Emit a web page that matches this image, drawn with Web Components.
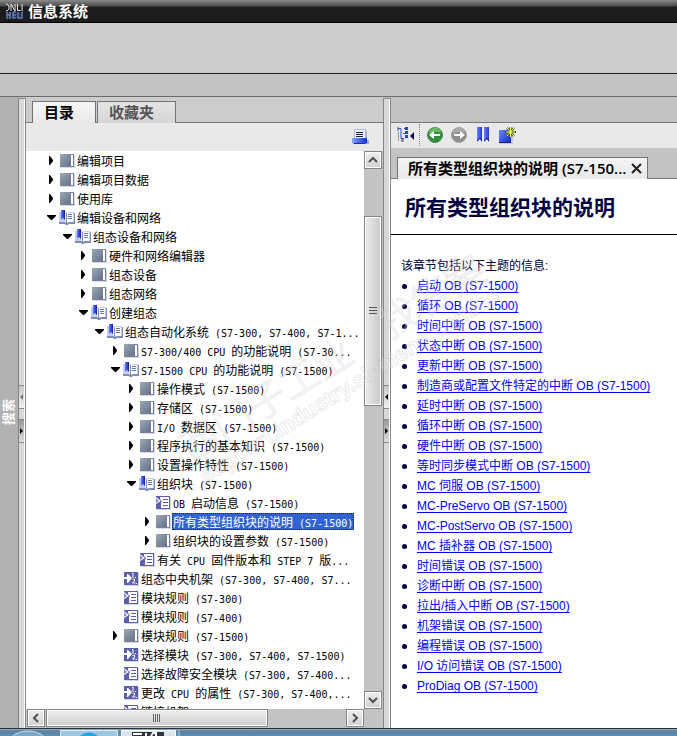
<!DOCTYPE html>
<html lang="zh-CN">
<head>
<meta charset="utf-8">
<title>信息系统</title>
<style>
html, body { margin: 0; height: 100%; }
body { overflow: hidden; font-family: "Liberation Sans", "Noto Sans CJK SC", sans-serif; font-size: 12px; }
</style>
</head>
<body>
<info-system></info-system>
<script>
const ICONS = {
  closed: `<svg width="16" height="16" viewBox="0 0 16 16"><defs><linearGradient id="g" x1="0" y1="0" x2="1" y2="1"><stop offset="0" stop-color="#9aa9b8"/><stop offset="1" stop-color="#667088"/></linearGradient></defs><path d="M2 2h14v13H2z" fill="#d3d9e6"/><path d="M1 1h14v13H1z" fill="#77819a"/><path d="M1 1h11v12H1z" fill="url(#g)"/><path d="M12 2h2v11h-2z" fill="#fff"/></svg>`,
  open: `<svg width="16" height="16" viewBox="0 0 16 16"><defs><linearGradient id="g" x1="0" y1="0" x2="1" y2="0"><stop offset="0" stop-color="#6b83ff"/><stop offset="1" stop-color="#0b13b4"/></linearGradient></defs><path d="M0 2h7l1 1 1-1h6v11H0z" fill="#c3cdec"/><path d="M0 12h6l1 1h2l1-1h5V3h1v11h-6l-1 1H7l-1-1H0z" fill="#7e8cb4"/><path d="M6 3h1v9H6z" fill="#eef2fc"/><path d="M7.500 3v10" stroke="#7f8cb8"/><path d="M8 3h6v9H8z" fill="#fbfcff"/><path d="M9 4.500h4M9 6.500h4M9 8.500h4" stroke="#6478b4"/><path d="M2 0h4v10L4 8l-2 2z" fill="url(#g)"/></svg>`,
  page: `<svg width="16" height="16" viewBox="0 0 16 16"><path d="M2 2h14v13H2z" fill="#d4d7e9"/><path d="M1 1h14v13H1z" fill="#5c60aa"/><path d="M5 2h9v11H6V8l1-2-2-2z" fill="#fff"/><path d="M1 2l5 4-5 3z" fill="#fff"/><path d="M1 3l3 3-3 2z" fill="#8589c4"/><path d="M8 4.500h5M8 7.500h5M8 10.500h5" stroke="#5c60aa"/></svg>`,
  link: `<svg width="16" height="16" viewBox="0 0 16 16"><path d="M2 2h14v13H2z" fill="#cfd2e8"/><path d="M1 1h14v13H1z" fill="#5b60a8"/><path d="M1 6h3V3h1l4 4-4 5H4V8H1z" fill="#fff"/><path d="M9 3l1-1v5M12 6.500h1M9.500 9l1-1h1v2l-2 2h3M13 12.500h1" fill="none" stroke="#fff"/></svg>`,
  print: `<svg width="17" height="17" viewBox="0 0 17 17"><defs><linearGradient id="g"><stop stop-color="#86a5ff"/><stop offset="1" stop-color="#1230d8"/></linearGradient></defs><path d="M4 2h11v9H4zM2 11h15v4H2z" fill="#a7abb8"/><path d="M2.500.5h11v11h-11z" fill="#edf3ff" stroke="#a9b8df"/><path d="M4 3.500h7M4 5.500h7M4 7.500h7" stroke="#101858"/><path d="M0 9h15v5l-2 1H2l-2-1z" fill="url(#g)"/><path d="M2 14.500h11" stroke="#1c2bb2"/></svg>`,
  tree: `<svg width="17" height="17" viewBox="0 0 17 17"><path d="M1 1v4M1 2.500h3v10h3M7 2.500h2M6 7.500h2" fill="none" stroke="#334dbc"/><path d="M1.500 6v9M4 14.500h3" fill="none" stroke="#9b9ba0"/><path d="M8 1h3v3H8zM8 5h3v3H8zM8 9h3v3H8z" fill="#2643c2"/><path d="M4 13h3v3H4z" fill="#909096"/><path d="M17 6v8l-4-4z" fill="#080b50"/></svg>`,
  back: `<svg width="16" height="16" viewBox="0 0 16 16"><circle cx="8" cy="8" r="7.500" fill="#2f9137" stroke="#557d5a"/><path d="M2 7a6 6 0 0 1 12-1q-6-3-12 1" fill="#67bb5e"/><path d="M2 8l5-4v3h6v2H7v3z" fill="#fff"/></svg>`,
  next: `<svg width="16" height="16" viewBox="0 0 16 16"><circle cx="8" cy="8" r="7.500" fill="#8c8c8c" stroke="#a1a1a1"/><path d="M2 7a6 6 0 0 1 12-1q-6-3-12 1" fill="#aaa"/><path d="M14 8L9 4v3H3v2h6v3z" fill="#fff"/></svg>`,
  marks: `<svg width="14" height="17" viewBox="0 0 14 17"><defs><linearGradient id="g" x2="1"><stop stop-color="#6c84ff"/><stop offset="1" stop-color="#2637cf"/></linearGradient></defs><path d="M1 1h5v15l-2-3-3 3z" fill="url(#g)"/><path d="M8 1h5v15l-2-3-3 3z" fill="url(#g)"/><path d="M1 15l3-3 2 3M8 15l3-3 2 3" fill="none" stroke="#1a1e81"/></svg>`,
  add: `<svg width="18" height="18" viewBox="0 0 18 18"><defs><linearGradient id="g" x2="1" y2="1"><stop stop-color="#6c88ff"/><stop offset="1" stop-color="#1327c9"/></linearGradient></defs><path d="M2 5h13v13H2z" fill="#c9c9d0"/><path d="M1 4h12v13H1z" fill="url(#g)"/><path d="M1 16.500h12" stroke="#171c77"/><path d="M12.500 1v10M7 6h11M9 2l7 8M16 2L9 10" stroke="#344b30" stroke-width="2"/><path d="M12.500 1v10M8 6h9M9 2l7 8M16 2L9 10" stroke="#ffff58"/></svg>`,
  help: `<svg width="17" height="17" viewBox="0 0 17 17"><path d="M0 1h1l2 2v3L1 8H0M5 8V1l4 7V1M11.500 1v6.500h3M16 1v7" fill="none" stroke="#e3e7ec"/><path d="M0 9h17v7H0z" fill="#263052"/><path d="M1 9v7M4 9v7M1 12h3M10 9H7v6h3M7 12h3M12 9v6h3M16 16V9h1" fill="none" stroke="#8497ce"/></svg>`
};

const define = (name, css, markup = '<slot></slot>', setup) => {
  const template = document.createElement('template');
  template.innerHTML = `<style>*{box-sizing:border-box}${css}</style>${typeof markup === 'string' ? markup : ''}`;
  customElements.define(name, class extends HTMLElement {
    connectedCallback() {
      if (this.shadowRoot) return;
      const root = this.attachShadow({ mode: 'open' });
      root.append(template.content.cloneNode(true));
      if (typeof markup === 'function') root.append(document.createRange().createContextualFragment(markup(this)));
      if (setup) setup(this, root);
    }
  });
};

define('ui-icon', ':host{display:inline-flex;flex:none}svg{display:block}', el => ICONS[el.getAttribute('name')]);

define('title-bar', `
:host{display:flex;align-items:center;gap:5px;flex:none;height:23px;padding:0 6px;background:linear-gradient(#8a8a8a 0,#4b4b4b 6px,#1c1c1c 7px,#1c1c1c 22px,#000 22px);color:#fff}
h1{margin:0;font-size:15px;line-height:22px;font-weight:700}`,
'<ui-icon name="help"></ui-icon><h1><slot></slot></h1>');

define('pane-tab', `
:host{display:block;flex:none}
button{display:block;height:22px;min-width:63px;padding:0 21px 2px 11px;border:1px solid #747474;border-bottom:0;background:linear-gradient(#e4e4e4,#d6d6d6);color:#555;font:700 15px/18px "Noto Sans CJK SC",sans-serif;text-align:left}
:host([active]) button{height:23px;background:linear-gradient(#f6f6f6,#e9e9e9);color:#000}`,
'<button type="button" role="tab"><slot></slot></button>');

define('split-bar', `
:host{display:flex;flex:none;flex-direction:column;align-items:stretch;justify-content:center;gap:10px;width:8px;margin-top:1px;border:1px solid #858585;border-bottom:0;background:linear-gradient(90deg,#d8d8d8 5px,#fff 5px)}
button{display:flex;align-items:center;justify-content:center;height:24px;width:5px;padding:0;border:0;border-top:1px solid #8a8a8a;border-bottom:1px solid #8a8a8a;background:linear-gradient(#c9c9c9,#eee)}
button+button{background:linear-gradient(#999,#ddd)}
i{width:0;height:0;border:3px solid transparent;border-left:0;border-right:3px solid #000}
:host([muted]) button:first-of-type i{border-right-color:#777}
button+button i{border-right:0;border-left:3px solid #000}`,
'<button type="button" aria-label="向左折叠"><i></i></button><button type="button" aria-label="向右展开"><i></i></button>');

define('scroll-bar', `
:host{display:flex;flex:none;background:#c3c3c3}
:host([vertical]){flex-direction:column;width:19px}
:host([horizontal]){height:19px}
button{display:flex;align-items:center;justify-content:center;flex:none;width:18px;height:18px;padding:0;border:1px solid #858585;box-shadow:inset 0 0 0 1px #fff;background:linear-gradient(#eee,#d2d2d2)}
.track{flex:1;display:flex;min-width:0;min-height:0}
.thumb{display:flex;align-items:center;justify-content:center;border:1px solid #858585;box-shadow:inset 0 0 0 1px #fff}
:host([vertical]) .track{flex-direction:column;padding-top:47px}
:host([vertical]) .thumb{width:18px;flex:0 0 40%;background:linear-gradient(90deg,#ececec,#c8c8c8)}
:host([horizontal]){padding-left:1px}
:host([horizontal]) .track{padding-left:1px}
:host([horizontal]) .thumb{height:18px;flex:0 0 74%;background:linear-gradient(#eee,#d0d0d0)}
.grip{width:8px;height:8px;background:repeating-linear-gradient(#555 0 1px,transparent 1px 3px)}
:host([horizontal]) .grip{background:repeating-linear-gradient(90deg,#666 0 1px,transparent 1px 2px)}
svg{fill:none;stroke:#505050;stroke-width:2}`,
el => {
  const v = el.hasAttribute('vertical');
  const arrow = d => `<svg width="12" height="12" viewBox="0 0 12 12"><path d="${d}"/></svg>`;
  return `<button type="button" aria-label="${v ? '向上' : '向左'}">${arrow(v ? 'M2 8l4-4 4 4' : 'M8 2L4 6l4 4')}</button><div class="track"><div class="thumb"><div class="grip"></div></div></div><button type="button" aria-label="${v ? '向下' : '向右'}">${arrow(v ? 'M2 4l4 4 4-4' : 'M4 2l4 4-4 4')}</button>`;
});

const latin = text => text.replace(/[\x20-\x7e]+/g, run => `<span>${run}</span>`);

define('tree-item', `
:host{display:flex;align-items:center;height:19px;white-space:pre;color:#000}
.arrow{flex:none;width:12px;height:9px;fill:#000}
.label{margin-left:1px;padding:0 1px;font:12px/17px "Noto Sans CJK SC",sans-serif}
.label span{font:10px/12px "DejaVu Sans Mono",monospace}
:host([selected]) .label{background:#3163d1;color:#fff;outline:1px dotted #223;outline-offset:-1px}`,
el => {
  const kind = el.getAttribute('kind');
  const arrow = { closed: 'M2 0h1l3 4v1L3 9H2z', open: 'M0 2h9v1L5 7H4L0 3z' }[kind];
  return `<svg class="arrow" viewBox="0 0 12 9">${arrow ? `<path d="${arrow}"/>` : ''}</svg><ui-icon name="${kind}"></ui-icon><div class="label">${latin(el.getAttribute('label'))}</div>`;
}, el => { el.style.paddingLeft = 21 + 16 * el.getAttribute('level') + 'px'; });

const TREE = [
  [0, 'closed', '编辑项目'], [0, 'closed', '编辑项目数据'], [0, 'closed', '使用库'],
  [0, 'open', '编辑设备和网络'], [1, 'open', '组态设备和网络'],
  [2, 'closed', '硬件和网络编辑器'], [2, 'closed', '组态设备'], [2, 'closed', '组态网络'],
  [2, 'open', '创建组态'], [3, 'open', '组态自动化系统 (S7-300, S7-400, S7-1...'],
  [4, 'closed', 'S7-300/400 CPU 的功能说明 (S7-30...'], [4, 'open', 'S7-1500 CPU 的功能说明 (S7-1500)'],
  [5, 'closed', '操作模式 (S7-1500)'], [5, 'closed', '存储区 (S7-1500)'],
  [5, 'closed', 'I/O 数据区 (S7-1500)'], [5, 'closed', '程序执行的基本知识 (S7-1500)'],
  [5, 'closed', '设置操作特性 (S7-1500)'], [5, 'open', '组织块 (S7-1500)'],
  [6, 'page', 'OB 启动信息 (S7-1500)'], [6, 'closed', '所有类型组织块的说明 (S7-1500)', true],
  [6, 'closed', '组织块的设置参数 (S7-1500)'], [5, 'page', '有关 CPU 固件版本和 STEP 7 版...'],
  [4, 'link', '组态中央机架 (S7-300, S7-400, S7...'], [4, 'page', '模块规则 (S7-300)'],
  [4, 'page', '模块规则 (S7-400)'], [4, 'closed', '模块规则 (S7-1500)'],
  [4, 'link', '选择模块 (S7-300, S7-400, S7-1500)'], [4, 'page', '选择故障安全模块 (S7-300, S7-400...'],
  [4, 'link', '更改 CPU 的属性 (S7-300, S7-400,...'], [4, 'page', '链接机架 (S7-300)']
];

define('contents-tree', ':host{display:block;flex:1;min-width:0;overflow:hidden;background:#fff}',
  () => TREE.map(([level, kind, label, sel]) => `<tree-item role="treeitem" level="${level}" kind="${kind}" label="${label}"${sel ? ' selected aria-selected="true"' : ''}></tree-item>`).join(''));

define('contents-pane', `
:host{display:flex;flex-direction:column;flex:0 1 357px;min-width:0;background:#ccc}
.tabs{display:flex;gap:1px;flex:none;height:26px;padding:4px 6px 0;background:linear-gradient(#777,#777) bottom/100% 1px no-repeat}
.tools{display:flex;flex:none;justify-content:flex-end;height:28px;padding:6px 14px 0;background:#e9e9e9}
.tools button{padding:0;border:0;background:none;height:17px}
.view{display:flex;flex:1;min-height:0}
.bottom{display:flex;flex:none;background:#c3c3c3}
.bottom scroll-bar{flex:1;margin-right:19px}`,
`<div class="tabs" role="tablist"><pane-tab active>目录</pane-tab><pane-tab>收藏夹</pane-tab></div>
<div class="tools"><button type="button" aria-label="打印"><ui-icon name="print"></ui-icon></button></div>
<div class="view"><contents-tree role="tree"></contents-tree><scroll-bar vertical></scroll-bar></div>
<div class="bottom"><scroll-bar horizontal></scroll-bar></div>`);

define('help-toolbar', `
:host{display:flex;align-items:center;gap:8px;flex:none;height:26px;padding:0 6px 2px;border-top:1px solid #777;background:#e9e9e9}
button{display:flex;align-items:center;justify-content:center;width:16px;height:18px;padding:0;border:0;background:none}
button:first-of-type{width:17px}
.sep{height:22px;border-left:1px dotted #888;margin:0 -1px 0 -3px}`,
`<button type="button" aria-label="显示目录"><ui-icon name="tree"></ui-icon></button><div class="sep"></div>
<button type="button" aria-label="后退"><ui-icon name="back"></ui-icon></button>
<button type="button" aria-label="前进"><ui-icon name="next"></ui-icon></button>
<button type="button" aria-label="收藏"><ui-icon name="marks"></ui-icon></button>
<button type="button" aria-label="新标签"><ui-icon name="add"></ui-icon></button>`);

define('topic-tab', `
:host{display:flex;flex:none;padding:9px 6px 0;background:linear-gradient(#777,#777) bottom/100% 1px no-repeat #c3c3c3}
div{display:flex;align-items:center;height:22px;padding:0 5px 2px 10px;border:1px solid #747474;border-bottom:0;background:linear-gradient(#f3f3f3,#e9e9e9);white-space:pre;color:#000}
b{font:700 15px/18px "Noto Sans CJK SC",sans-serif}
span{font:600 15px/18px "Open Sans",sans-serif}
button{display:flex;margin-left:5px;padding:2px 0 0;border:0;background:none}`,
`<div role="tab"><b>所有类型组织块的说明</b><span> (S7-150...</span><button type="button" aria-label="关闭"><svg width="11" height="11" viewBox="0 0 11 11"><path d="M1 1l9 9M10 1l-9 9" stroke="#222" stroke-width="2"/></svg></button></div>`);

const LINKS = ['启动 OB', '循环 OB', '时间中断 OB', '状态中断 OB', '更新中断 OB', '制造商或配置文件特定的中断 OB',
  '延时中断 OB', '循环中断 OB', '硬件中断 OB', '等时同步模式中断 OB', 'MC 伺服 OB', 'MC-PreServo OB',
  'MC-PostServo OB', 'MC 插补器 OB', '时间错误 OB', '诊断中断 OB', '拉出/插入中断 OB', '机架错误 OB',
  '编程错误 OB', 'I/O 访问错误 OB', 'ProDiag OB'];

define('topic-page', `
:host{display:block;flex:1;min-height:0;overflow:hidden;background:#fff;color:#000040;font:12px/20px "Liberation Sans","Noto Sans CJK SC",sans-serif}
h2{margin:0;padding:0 14px;height:56px;border-bottom:1px solid #000;font:700 21px/54px "Noto Sans CJK SC",sans-serif}
p{margin:0;padding:21px 10px 0}
ul{margin:0;padding:0 11px;list-style:none}
li{display:flex;align-items:center;gap:10px;height:20px}
li::before{content:"";width:5px;height:5px;border-radius:3px;background:#000040}
a{color:#00f;text-decoration:underline;text-underline-offset:2px}`,
() => `<h2>所有类型组织块的说明</h2><p>该章节包括以下主题的信息:</p><ul>${LINKS.map(t => `<li><a href="#">${t} (S7-1500)</a></li>`).join('')}</ul>`);

define('topic-pane', ':host{display:flex;flex-direction:column;flex:1;min-width:0;padding-top:25px;background:#c3c3c3}',
  '<help-toolbar></help-toolbar><topic-tab></topic-tab><topic-page></topic-page>');

define('search-strip', `
:host{display:flex;flex:none;align-items:center;justify-content:flex-start;width:18px;background:#b1b1b1}
button{padding:0;border:0;background:none;color:#fff;font:700 13px/16px "Noto Sans CJK SC",sans-serif;writing-mode:vertical-rl;text-orientation:sideways;transform:rotate(180deg)}`,
'<button type="button">搜索</button>');

define('task-bar', `
:host{display:flex;flex:none;height:8px;overflow:hidden;padding-left:12px;border-top:1px solid #26323e;background:linear-gradient(#9bafc0 0,#5d7f9e 2px,#5b8fb8)}
svg{display:block}`,
`<svg width="170" height="7" viewBox="0 0 170 7"><ellipse cx="16" cy="14" rx="19" ry="12" fill="#7aa6c8" stroke="#c8d8e4"/><path d="M48.500 8V1.500h57V8" fill="#9ec6e0" stroke="#dcebf4"/><path d="M69 7q8-5 16 0" fill="#23a6e0" stroke="#23a6e0" stroke-width="2"/><path d="M109.500 8V1.500h54V8" fill="#dce4ec" stroke="#fff"/><path d="M120 3h32v4h-32z" fill="#2d3344"/><path d="M121 5h9M134 4v3M139 7l2-3h3v3" stroke="#fff" stroke-width="2" fill="none"/><path d="M167 1v6" stroke="#a9cde4"/></svg>`);

define('water-mark', `
:host{position:absolute;inset:0;display:grid;place-items:center;overflow:hidden;pointer-events:none;color:rgba(255,255,255,.2);-webkit-text-stroke:1px rgba(190,190,190,.35)}
div{display:flex;flex-direction:column;align-items:center;white-space:nowrap;transform:rotate(-32deg)}
.name{font:300 39px/42px "Noto Sans CJK SC",sans-serif}
.url{font:700 22px/28px "Liberation Sans",sans-serif}`,
'<div aria-hidden="true"><span class="name">西门子工业　找答案</span><span class="url">support.industry.siemens.com/cs</span></div>');

define('info-system', `
:host{position:relative;display:flex;flex-direction:column;height:100vh;background:#c4c4c4}
.menu{flex:none;height:51px;border-bottom:1px solid #1e2632;background:#cdcdcd}
.bar{flex:none;height:23px;border-bottom:1px solid #6c6c6c;background:#c4c4c4}
main{display:flex;flex:1;min-height:0}`,
`<title-bar>信息系统</title-bar><div class="menu"></div><div class="bar"></div>
<main><search-strip></search-strip><split-bar muted></split-bar><contents-pane></contents-pane><split-bar></split-bar><topic-pane></topic-pane></main>
<task-bar></task-bar><water-mark></water-mark>`);
</script>
</body>
</html>
